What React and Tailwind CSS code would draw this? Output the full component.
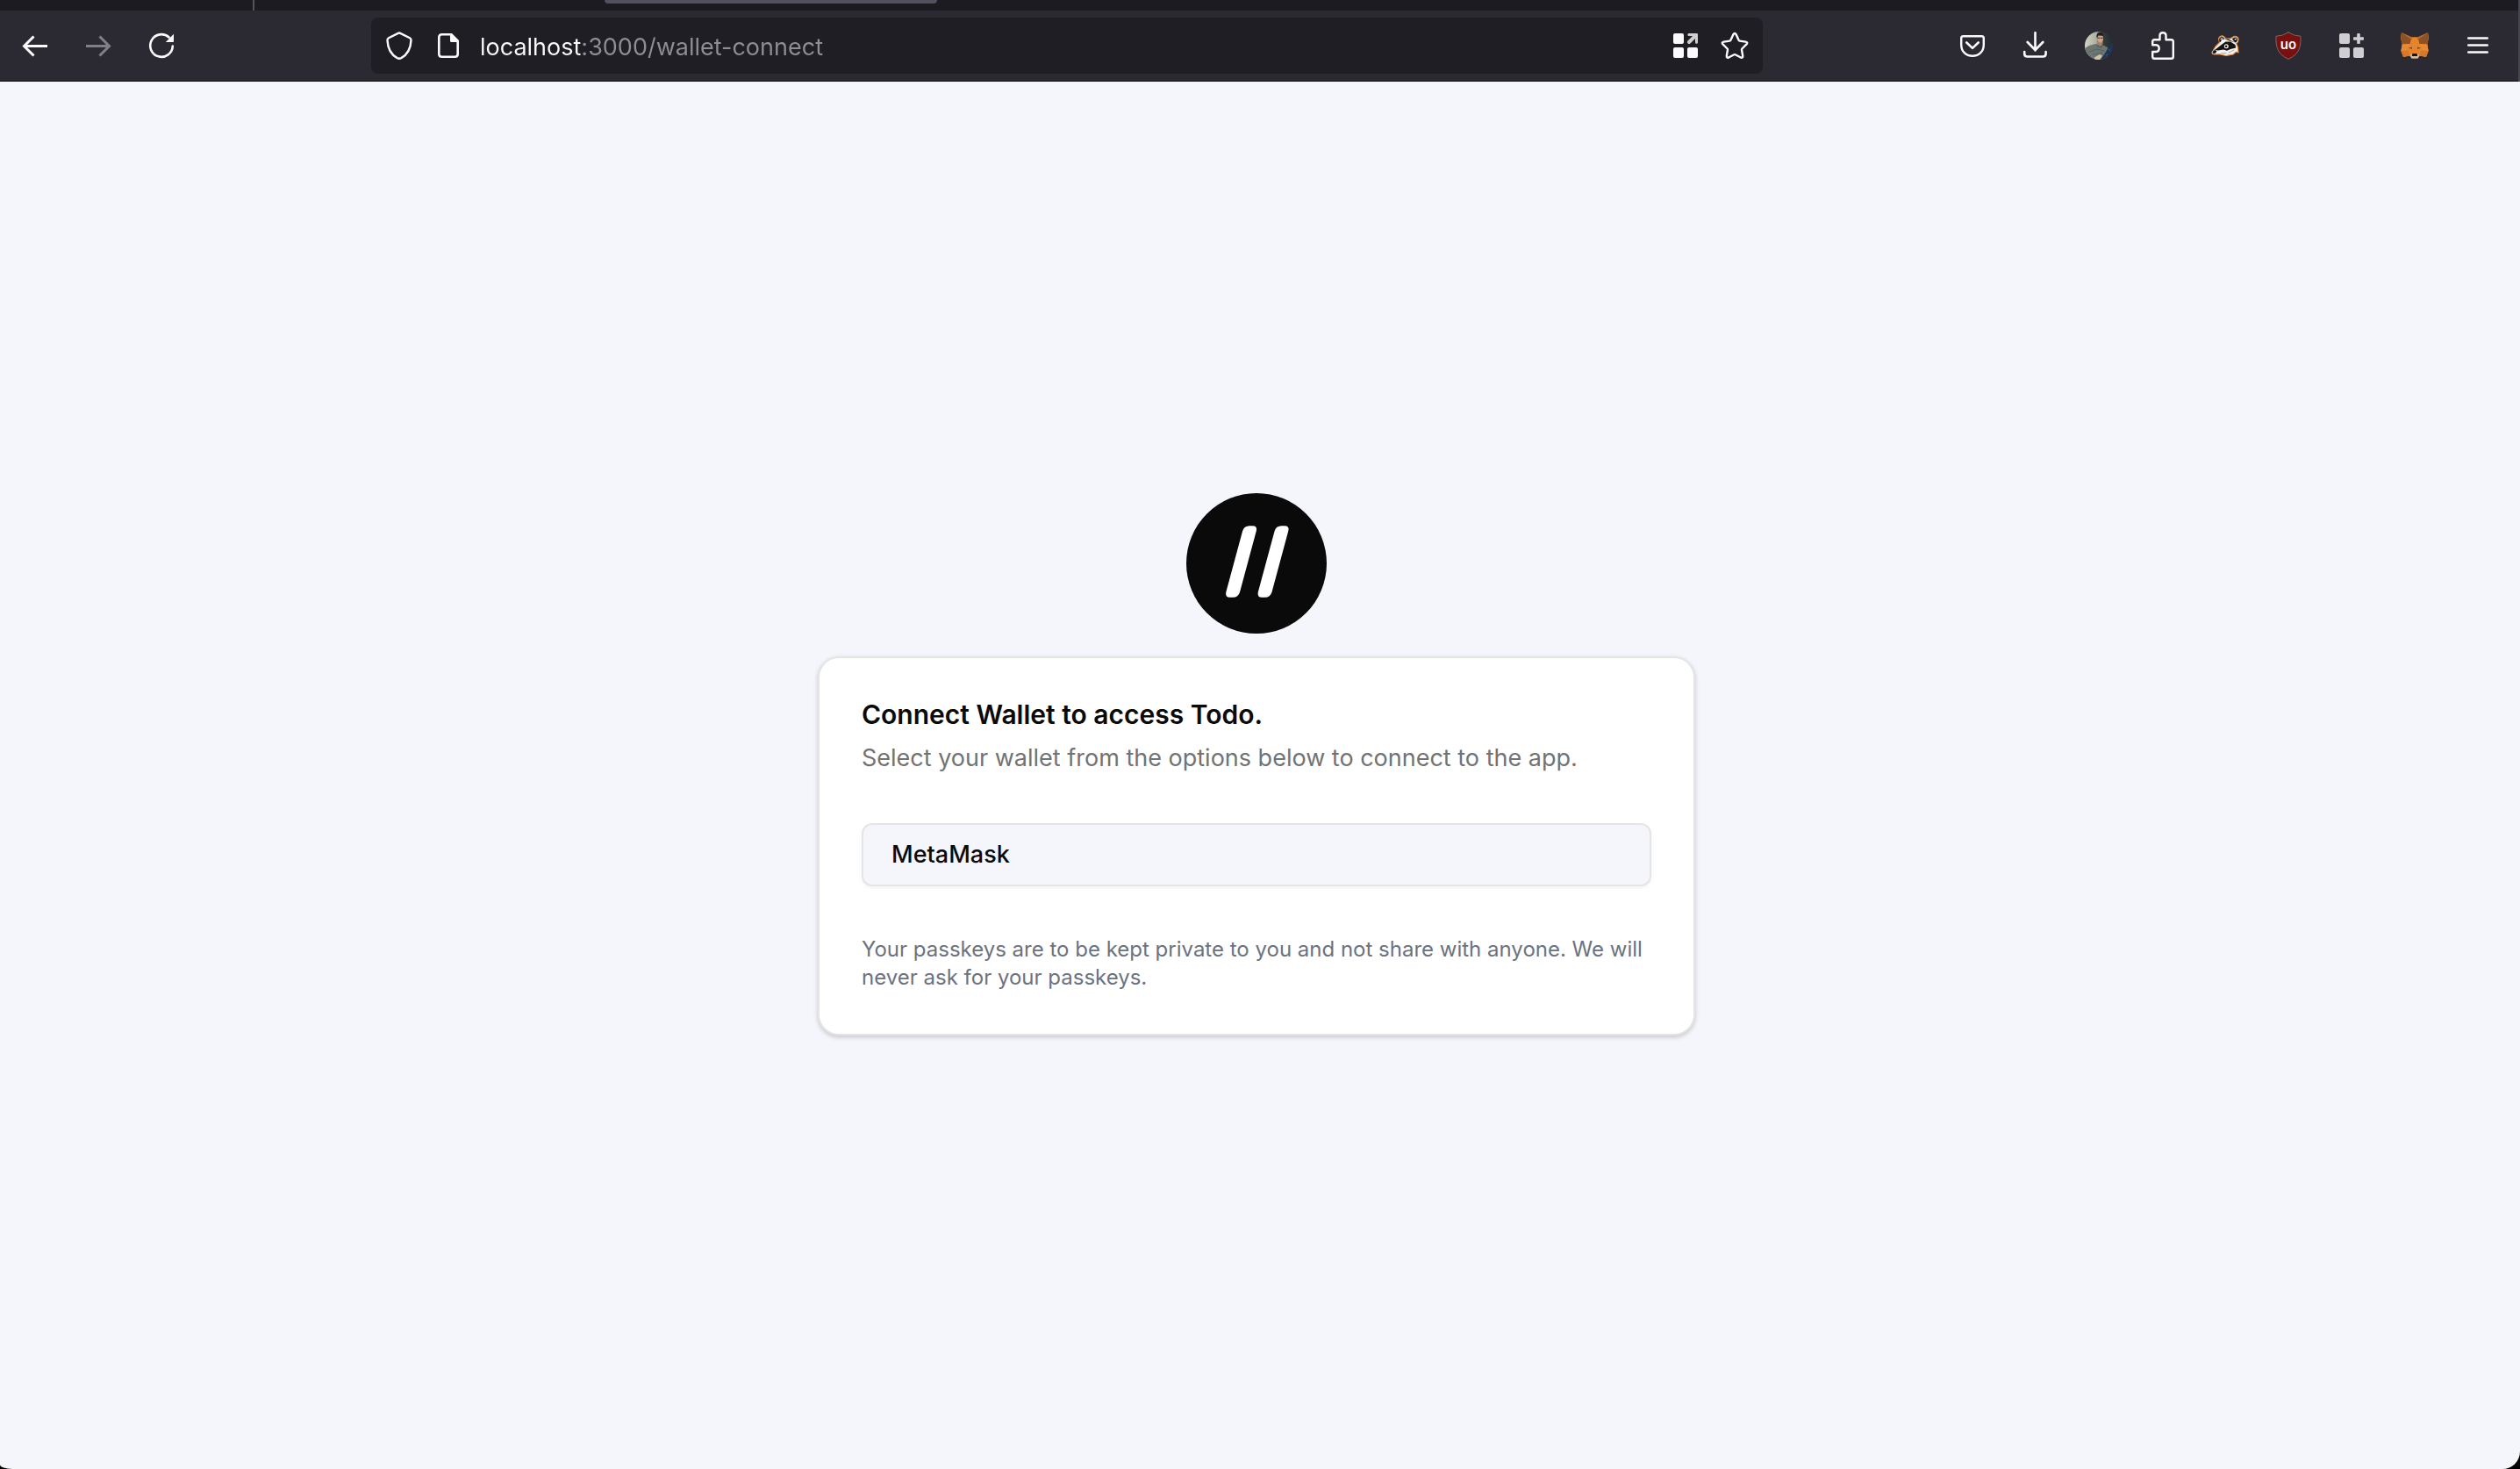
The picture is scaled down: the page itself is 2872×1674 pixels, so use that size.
import React from "react";

function Icon({ children, className = "" }) {
  return (
    <svg
      viewBox="0 0 32 32"
      className={`size-8 shrink-0 ${className}`}
      fill="none"
      stroke="currentColor"
      strokeWidth="2.6"
      strokeLinecap="round"
      strokeLinejoin="round"
      aria-hidden="true"
    >
      {children}
    </svg>
  );
}

function ToolbarButton({ label, disabled, children }) {
  return (
    <button
      type="button"
      aria-label={label}
      disabled={disabled}
      className="flex h-16 w-[72px] shrink-0 items-center justify-center rounded-lg text-[#fbfbfe] disabled:text-[#807f86]"
    >
      {children}
    </button>
  );
}

function FieldButton({ label, children }) {
  return (
    <button
      type="button"
      aria-label={label}
      className="flex h-14 w-14 shrink-0 items-center justify-center rounded-lg text-[#fbfbfe]"
    >
      {children}
    </button>
  );
}

function BackIcon() {
  return (
    <Icon>
      <path d="M3.5 16.5H30M14.5 5.5L3.5 16.5L14.5 27.5" strokeWidth="3" strokeLinecap="butt" strokeLinejoin="miter" />
    </Icon>
  );
}

function ForwardIcon() {
  return (
    <Icon>
      <path d="M28.5 16.5H2M17.5 5.5L28.5 16.5L17.5 27.5" strokeWidth="3" strokeLinecap="butt" strokeLinejoin="miter" />
    </Icon>
  );
}

function ReloadIcon() {
  return (
    <Icon>
      <path d="M28.8 16.5A12.8 12.8 0 1 1 24.6 6.5" />
      <path d="M30 2.8V11.2Q30 12 29.2 12H20.8Z" fill="currentColor" stroke="none" />
    </Icon>
  );
}

function ShieldIcon() {
  return (
    <Icon>
      <path d="M14.8 1.9Q16 1.2 17.2 1.9L28 7.3Q29.6 8.1 29.5 9.9C29.1 19.5 25 26.4 18.3 30.1Q16 31.3 13.7 30.1C7 26.4 2.9 19.5 2.5 9.9Q2.4 8.1 4 7.3Z" strokeWidth="2.4" />
    </Icon>
  );
}

function PageIcon() {
  return (
    <Icon>
      <path d="M19 3.3H8.5Q5.3 3.3 5.3 6.5V25.5Q5.3 28.7 8.5 28.7H23.5Q26.7 28.7 26.7 25.5V11" />
      <path d="M18 2H20L28 10V12H19.5Q18 12 18 10.5Z" fill="currentColor" stroke="none" />
    </Icon>
  );
}

function GridArrowIcon() {
  return (
    <Icon>
      <g fill="currentColor" stroke="none">
        <rect x="2" y="2" width="12" height="12" rx="2" />
        <rect x="2" y="18" width="12" height="12" rx="2" />
        <rect x="18" y="18" width="12" height="12" rx="2" />
      </g>
      <path d="M19.8 3.5H28.5V12.2" stroke="#cfcfd2" strokeWidth="3" />
      <path d="M28 4L20 12" stroke="#cfcfd2" strokeWidth="4" />
    </Icon>
  );
}

function StarIcon() {
  return (
    <Icon>
      <path d="M14.4 3.2Q16 .8 17.6 3.2L20.6 9.8Q20.9 10.5 21.7 10.6L28.5 11.6Q31.4 12.2 29.5 14.4L24.4 19.5Q23.9 20.1 24 20.8L25.2 27.5Q25.5 30.4 22.9 29.5L16.7 26.3Q16 25.9 15.3 26.3L9.1 29.5Q6.5 30.4 6.8 27.5L8 20.8Q8.1 20.1 7.6 19.5L2.5 14.4Q.6 12.2 3.5 11.6L10.3 10.6Q11.1 10.5 11.4 9.8Z" strokeWidth="2.4" />
    </Icon>
  );
}

function PocketIcon() {
  return (
    <Icon>
      <path d="M5.5 5.2H26.5Q28.8 5.2 28.8 7.5V15C28.8 22.5 23.5 27.8 16 27.8S3.2 22.5 3.2 15V7.5Q3.2 5.2 5.5 5.2Z" strokeWidth="2.4" />
      <path d="M9.3 12.5L16 18.9L22.7 12.5" />
    </Icon>
  );
}

function DownloadIcon() {
  return (
    <Icon>
      <path d="M15.5 1.2V21.5M6.7 12L15.5 21L24.3 12" />
      <path d="M3.2 23V25.2Q3.2 28.5 6.5 28.5H24.3Q27.6 28.5 27.6 25.2V23" />
    </Icon>
  );
}

function AvatarIcon() {
  return (
    <Icon>
      <defs>
        <clipPath id="avatar-clip">
          <circle cx="16" cy="16" r="16" />
        </clipPath>
        <linearGradient id="avatar-wall" x1="0" x2="1">
          <stop offset="0" stopColor="#d3d4c6" />
          <stop offset=".4" stopColor="#aeb0a2" />
          <stop offset=".62" stopColor="#3a3c3a" />
          <stop offset="1" stopColor="#222c31" />
        </linearGradient>
      </defs>
      <g clipPath="url(#avatar-clip)" stroke="none">
        <rect width="32" height="32" fill="url(#avatar-wall)" />
        <path d="M0 19L5 16L12 14L19 14.5L26 18L27 32H5L0 26Z" fill="#6d7672" />
        <path d="M14.5 10H20.5V14L17.5 16.5L14.5 14Z" fill="#a6816b" />
        <path d="M14 4.5Q17.5 2 21 4.5V9Q20 12.5 17.5 12.7Q15 12 14.1 8.5Z" fill="#c9a58c" />
        <path d="M13.6 7Q12.8 1 17.5 .8Q22 1 21.4 7L20.2 4.7L15.4 4.5L14.2 7Z" fill="#20201f" />
        <path d="M14.8 7.3H16.8M18.3 7.3H20.3" stroke="#33302d" strokeWidth="1" />
        <path d="M13 15L17 17.5L20 15.5L19 18.5L14 17Z" fill="#4b5353" />
        <path d="M5 23L14 20L22 22M10 26L20 24" stroke="#58615f" strokeWidth="1" />
        <path d="M11 29.5L17 26L20 27.5L17 32H11Z" fill="#cfc3a5" />
        <path d="M32 13L28 16L24 23L18 32H32Z" fill="#1d3658" />
        <path d="M27 20L29 22M24 27L26 26" stroke="#3b5d85" strokeWidth="1" />
      </g>
    </Icon>
  );
}

function PuzzleIcon() {
  return (
    <Icon>
      <path d="M13.5 9.2V4.6C13.5 .2 20.5 .2 20.5 4.6V9.2H26.5Q28.8 9.2 28.8 11.5V28.5Q28.8 30.8 26.5 30.8H7.5Q5.2 30.8 5.2 28.5V23H9.4C13.8 23 13.8 15.2 9.4 15.2H5.2V11.5Q5.2 9.2 7.5 9.2Z" strokeWidth="2.4" />
    </Icon>
  );
}

function BadgerIcon() {
  return (
    <Icon>
      <path d="M1 23.5L5 17L9.5 12.5L8.5 8Q10 4.5 13.5 5L17 8.2L22 8L26 5.5Q30.5 5 31 8.5Q31.3 12 28.7 13.5L30.5 18L31 24L28.5 23L25 26L17 27.5L10 25.8L3.5 26Q.8 25.8 1 23.5Z" fill="#f4f3f0" stroke="#e58a3c" strokeWidth="1.2" />
      <g stroke="none" fill="#151414">
        <path d="M9.3 11.5L9.2 8Q11 5.3 13.3 6.2L15.5 8.5L12 9L10.7 12Z" />
        <path d="M24 8L27 6.5Q30.3 6.7 29.9 9.5Q29.3 12.4 27.3 12.5L25 10Z" />
        <path d="M4 21L12 14.8L16.5 11.4L22 11.6L27.5 15L28.2 18.6L22 20L18 21.8L14 20.6L8 21.6Z" />
        <path d="M1.8 23L4 20.8L6.5 22.5L4.5 25L2.2 24.8Z" />
        <path d="M15 8.6L20 8.8L27 12.6L21 10.4Z" />
      </g>
      <circle cx="17.3" cy="16.7" r="2.5" fill="#f4f3f0" stroke="none" />
      <circle cx="17.1" cy="16.8" r="1.3" fill="#151414" stroke="none" />
      <path d="M11 8.5L12.7 7.8M27 9L28.4 8.4" stroke="#fff" strokeWidth="1.2" />
      <path d="M12 24.5H17M20 24L26 21" stroke="#a9a6a2" strokeWidth="1" />
    </Icon>
  );
}

function BlockerIcon() {
  return (
    <Icon>
      <path d="M16 .8Q22 5 30 5.3C30.5 18 28 26 16 31.4C4 26 1.5 18 2 5.3Q10 5 16 .8Z" fill="#77100f" stroke="#7d6467" strokeWidth="1" />
      <text x="16" y="20" textAnchor="middle" fontFamily="Inter, sans-serif" fontSize="15" fontWeight="600" fill="#fff" stroke="none">
        uo
      </text>
    </Icon>
  );
}

function GridPlusIcon() {
  return (
    <Icon className="text-[#cfcfd3]">
      <g fill="currentColor" stroke="none">
        <rect x="2" y="2" width="12" height="12" rx="2" />
        <rect x="2" y="18" width="12" height="12" rx="2" />
        <rect x="18" y="18" width="12" height="12" rx="2" />
        <rect x="18" y="6.2" width="12" height="3.6" rx="1" />
        <rect x="22.2" y="2" width="3.6" height="12" rx="1" />
      </g>
    </Icon>
  );
}

function FoxIcon() {
  return (
    <Icon>
      <g stroke="none">
        <path d="M1 1.2L12 6.2H20L31 1.2L32 7L30.3 14.5L31.6 22L29 29L21.5 27.5L19.5 30.5H12.5L10.5 27.5L3 29L.4 22L1.7 14.5L0 7Z" fill="#e5842c" />
        <path d="M1 1.2L12.5 6.3L10.5 14L1.8 14.6L.2 7Z" fill="#8b5226" />
        <path d="M31 1.2L19.5 6.3L21.5 14L30.2 14.6L31.8 7Z" fill="#8b5226" />
        <path d="M1 1.2L13.2 9.8L12 6.3Z" fill="#b9682b" />
        <path d="M31 1.2L18.8 9.8L20 6.3Z" fill="#b9682b" />
        <path d="M1.7 14.5L10.5 14L6.5 21L.4 22Z" fill="#e88a35" />
        <path d="M30.3 14.5L21.5 14L25.5 21L31.6 22Z" fill="#e88a35" />
        <path d="M.4 22L8.5 21.8L10.5 27.5L3 29Z" fill="#d67729" />
        <path d="M31.6 22L23.5 21.8L21.5 27.5L29 29Z" fill="#d67729" />
        <path d="M9 18.8L12.7 17.6L13 20Z" fill="#6b4a33" />
        <path d="M23 18.8L19.3 17.6L19 20Z" fill="#6b4a33" />
        <path d="M10.5 27.2L13 25H19L21.5 27.2L19.5 30.6H12.5Z" fill="#cdbfae" />
        <path d="M13.3 25H18.7L19.2 28H12.8Z" fill="#1c1715" />
      </g>
    </Icon>
  );
}

function MenuIcon() {
  return (
    <Icon>
      <path d="M5.3 7.5H26.7M5.3 15.5H26.7M5.3 23.5H26.7" strokeWidth="2.7" />
    </Icon>
  );
}

function BrowserChrome() {
  return (
    <header className="border-r-2 border-[#47464f] bg-[#2b2a33] text-[#fbfbfe]">
      <div className="flex h-3 items-start bg-[#1c1b22]">
        <div className="ml-72 h-full w-0.5 bg-[#54535c]" />
        <div className="ml-[399px] h-1 w-[379px] rounded-b-lg bg-[#52515d]" />
      </div>
      <div className="flex h-[81px] items-center border-b border-[#0c0c0f] pr-2.5 pl-1">
        <nav aria-label="History" className="flex">
          <ToolbarButton label="Back"><BackIcon /></ToolbarButton>
          <ToolbarButton label="Forward" disabled><ForwardIcon /></ToolbarButton>
          <ToolbarButton label="Reload"><ReloadIcon /></ToolbarButton>
        </nav>
        <div className="mx-[203px] flex h-16 min-w-0 flex-1 items-center rounded-lg bg-[#1f1e24] px-1">
          <FieldButton label="Tracking protection"><ShieldIcon /></FieldButton>
          <FieldButton label="Site information"><PageIcon /></FieldButton>
          <input
            type="text"
            aria-label="Address"
            defaultValue="localhost:3000/wallet-connect"
            spellCheck={false}
            className="ml-2 h-11 min-w-0 flex-1 bg-[linear-gradient(to_right,#fbfbfe_117px,#8f8e94_117px)] bg-clip-text pt-0.5 text-[27px] leading-10 text-transparent caret-white outline-none"
          />
          <FieldButton label="Open in container"><GridArrowIcon /></FieldButton>
          <FieldButton label="Bookmark this page"><StarIcon /></FieldButton>
        </div>
        <div className="flex">
          <ToolbarButton label="Save to Pocket"><PocketIcon /></ToolbarButton>
          <ToolbarButton label="Downloads"><DownloadIcon /></ToolbarButton>
          <ToolbarButton label="Account"><AvatarIcon /></ToolbarButton>
          <ToolbarButton label="Extensions"><PuzzleIcon /></ToolbarButton>
          <ToolbarButton label="Privacy Badger"><BadgerIcon /></ToolbarButton>
          <ToolbarButton label="uBlock Origin"><BlockerIcon /></ToolbarButton>
          <ToolbarButton label="Containers"><GridPlusIcon /></ToolbarButton>
          <ToolbarButton label="MetaMask extension"><FoxIcon /></ToolbarButton>
          <ToolbarButton label="Open application menu"><MenuIcon /></ToolbarButton>
        </div>
      </div>
    </header>
  );
}

function Logo() {
  const slash =
    "M72 37.3H75.5Q81.3 37.3 79.8 43L61 112.7Q59.3 118.7 53 118.7H50Q43.8 118.7 45.3 112.7L64 43.5Q65.7 37.3 72 37.3Z";
  return (
    <svg viewBox="0 0 160 160" className="size-40" role="img" aria-label="Todo logo">
      <circle cx="80" cy="80" r="80" fill="#0a0a0a" />
      <path d={slash} fill="#fff" />
      <path d={slash} fill="#fff" transform="translate(36.5 0)" />
    </svg>
  );
}

function WalletCard() {
  return (
    <section className="w-full max-w-[1000px] rounded-3xl border-2 border-[#e5e5e5] bg-white p-12 shadow-[0_2px_6px_rgba(0,0,0,0.1),0_2px_4px_rgba(0,0,0,0.1)]">
      <h1 className="text-[30px] leading-8 font-semibold text-[#0a0a0a]">Connect Wallet to access Todo.</h1>
      <p className="mt-3.5 text-[27px] leading-10 text-[#737373]">
        Select your wallet from the options below to connect to the app.
      </p>
      <button
        type="button"
        className="mt-[54px] flex h-[72px] w-full items-center rounded-xl border-2 border-[#e5e5e5] bg-[#f4f6fc] px-8 text-[27px] leading-10 font-medium text-[#0a0a0a] shadow-[0_2px_4px_rgba(0,0,0,0.05)]"
      >
        MetaMask
      </button>
      <p className="mt-14 text-[24px] leading-8 text-[#6b7280]">
        Your passkeys are to be kept private to you and not share with anyone. We will never ask for your passkeys.
      </p>
    </section>
  );
}

export default function App() {
  return (
    <div className="flex min-h-screen flex-col bg-black font-['Inter',sans-serif]">
      <BrowserChrome />
      <main className="flex flex-1 flex-col items-center justify-center gap-[26px] rounded-br-[20px] rounded-bl-[14px_5px] bg-[#f4f6fc] pr-2 pb-[25px]">
        <Logo />
        <WalletCard />
      </main>
    </div>
  );
}
